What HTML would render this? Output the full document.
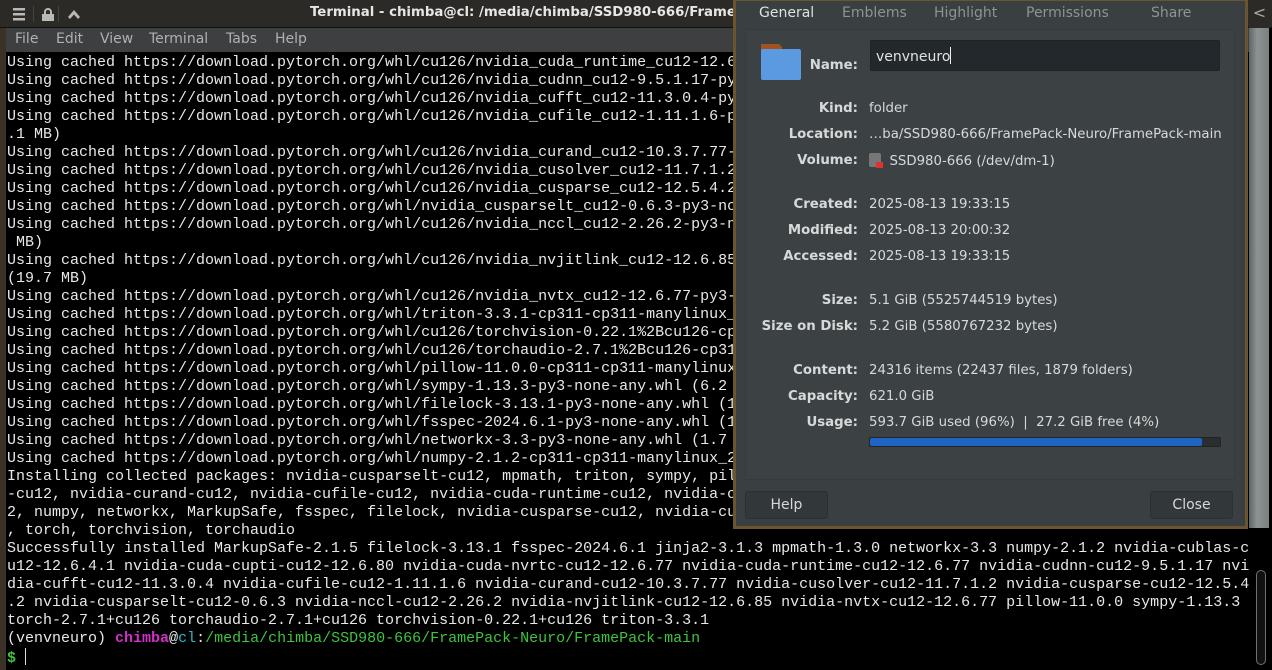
<!DOCTYPE html>
<html><head><meta charset="utf-8"><style>
*{margin:0;padding:0;box-sizing:border-box}
body{width:1272px;height:670px;overflow:hidden;background:#000;position:relative;font-family:"DejaVu Sans","Liberation Sans",sans-serif}
#title{position:absolute;left:0;top:0;width:1272px;height:28px;background:#2b2a27;border-bottom:1px solid #111}
#title .t{position:absolute;left:310px;top:5px;color:#e6e6e6;font-weight:bold;font-size:13.3px;font-family:"DejaVu Sans",sans-serif;white-space:nowrap}
#menu{position:absolute;left:6px;top:28px;width:1244px;height:24px;background:#3d3f40;color:#aeb2b2;font-size:14px}
#menu span{position:absolute;top:3px}
#term{position:absolute;left:7px;top:54px;font-family:"Liberation Mono",monospace;font-size:15px;line-height:18px;color:#e8e8e8;white-space:pre}
.m{color:#d02fc8;font-weight:bold}.c{color:#2fb9c8}.g{color:#3ec43e}
#lb{position:absolute;left:0;top:28px;width:6px;height:642px;background:#3a3226}
#sb{position:absolute;left:1249px;top:28px;width:21px;height:642px;background:#000}
#sbt{position:absolute;left:1249px;top:28px;width:20px;height:500px;background:linear-gradient(90deg,#5f6565,#8d9393 40%,#7a8080)}
#thumb{position:absolute;left:1256px;top:570px;width:10px;height:95px;border:1px solid #6d7373;border-radius:5px;background:#111}
#dlg{position:absolute;left:733px;top:-2px;width:515px;height:531px;background:#6b5430;padding:3px}
#in{position:absolute;left:3px;top:3px;right:3px;bottom:3px;background:#3a3f41}
#tabs{position:absolute;left:6px;top:0px;height:26px;font-size:14px;color:#8d9496}
#tabs span{position:absolute;top:4px;white-space:nowrap}
#panel{position:absolute;left:9px;top:28px;width:490px;height:451px;background:#3c4244;border:1px solid #353a3c}
.lbl{position:absolute;width:111px;text-align:right;font-weight:bold;color:#d6d9d9;font-size:13.3px;left:1px;margin-top:1px}
.val{position:absolute;left:123px;color:#d6d9d9;font-size:13.3px;white-space:nowrap;margin-top:1px}
.btn{position:absolute;top:490px;width:83px;height:28px;background:#32373a;border:1px solid #2c3032;border-radius:3px;color:#d6d9d9;font-size:14px;text-align:center;line-height:26px}
</style></head><body>
<div id="title">
<svg style="position:absolute;left:11px;top:6px" width="70" height="16"><g fill="#b8b8b8"><rect x="2" y="2" width="12" height="2.5"/><rect x="2" y="7" width="12" height="2.5"/><rect x="2" y="12" width="12" height="2.5"/><path d="M37 2a4 4 0 0 1 4 4v2h-2v-2a2 2 0 0 0-4 0v2h8v7h-12v-7h2v-2a4 4 0 0 1 4-4z"/><path d="M57 11l6-7 6 7-2 2-4-4.5-4 4.5z"/></g><rect x="22" y="0" width="1" height="16" fill="#444"/><rect x="47" y="0" width="1" height="16" fill="#444"/></svg>
<div class="t">Terminal - chimba@cl: /media/chimba/SSD980-666/FramePack-Neuro/FramePack-main</div>
</div>
<div id="lb"></div>
<div id="menu"><span style="left:9px">File</span><span style="left:50px">Edit</span><span style="left:94px">View</span><span style="left:143px">Terminal</span><span style="left:220px">Tabs</span><span style="left:269px">Help</span></div>
<div id="term">Using cached https://download.pytorch.org/whl/cu126/nvidia_cuda_runtime_cu12-12.6.77-py3-none-manylinux2014_x86_64.whl
Using cached https://download.pytorch.org/whl/cu126/nvidia_cudnn_cu12-9.5.1.17-py3-none-manylinux_2_28_x86_64.whl
Using cached https://download.pytorch.org/whl/cu126/nvidia_cufft_cu12-11.3.0.4-py3-none-manylinux2014_x86_64.whl
Using cached https://download.pytorch.org/whl/cu126/nvidia_cufile_cu12-1.11.1.6-py3-none-manylinux_2_27_x86_64.whl (1
.1 MB)
Using cached https://download.pytorch.org/whl/cu126/nvidia_curand_cu12-10.3.7.77-py3-none-manylinux2014_x86_64.whl
Using cached https://download.pytorch.org/whl/cu126/nvidia_cusolver_cu12-11.7.1.2-py3-none-manylinux2014_x86_64.whl
Using cached https://download.pytorch.org/whl/cu126/nvidia_cusparse_cu12-12.5.4.2-py3-none-manylinux2014_x86_64.whl
Using cached https://download.pytorch.org/whl/nvidia_cusparselt_cu12-0.6.3-py3-none-manylinux2014_x86_64.whl
Using cached https://download.pytorch.org/whl/cu126/nvidia_nccl_cu12-2.26.2-py3-none-manylinux2014_x86_64.whl (201.3
 MB)
Using cached https://download.pytorch.org/whl/cu126/nvidia_nvjitlink_cu12-12.6.85-py3-none-manylinux2010_x86_64.whl
(19.7 MB)
Using cached https://download.pytorch.org/whl/cu126/nvidia_nvtx_cu12-12.6.77-py3-none-manylinux2014_x86_64.whl
Using cached https://download.pytorch.org/whl/triton-3.3.1-cp311-cp311-manylinux_2_27_x86_64.whl
Using cached https://download.pytorch.org/whl/cu126/torchvision-0.22.1%2Bcu126-cp311-cp311-manylinux_2_28_x86_64.whl
Using cached https://download.pytorch.org/whl/cu126/torchaudio-2.7.1%2Bcu126-cp311-cp311-manylinux_2_28_x86_64.whl
Using cached https://download.pytorch.org/whl/pillow-11.0.0-cp311-cp311-manylinux_2_28_x86_64.whl
Using cached https://download.pytorch.org/whl/sympy-1.13.3-py3-none-any.whl (6.2 MB)
Using cached https://download.pytorch.org/whl/filelock-3.13.1-py3-none-any.whl (11 kB)
Using cached https://download.pytorch.org/whl/fsspec-2024.6.1-py3-none-any.whl (177 kB)
Using cached https://download.pytorch.org/whl/networkx-3.3-py3-none-any.whl (1.7 MB)
Using cached https://download.pytorch.org/whl/numpy-2.1.2-cp311-cp311-manylinux_2_17_x86_64.whl
Installing collected packages: nvidia-cusparselt-cu12, mpmath, triton, sympy, pillow, nvidia-nvtx-cu12, nvidia-nvjitlink
-cu12, nvidia-curand-cu12, nvidia-cufile-cu12, nvidia-cuda-runtime-cu12, nvidia-cuda-nvrtc-cu12, nvidia-cublas-cu1
2, numpy, networkx, MarkupSafe, fsspec, filelock, nvidia-cusparse-cu12, nvidia-cufft-cu12, nvidia-cudnn-cu12, jinja2
, torch, torchvision, torchaudio
Successfully installed MarkupSafe-2.1.5 filelock-3.13.1 fsspec-2024.6.1 jinja2-3.1.3 mpmath-1.3.0 networkx-3.3 numpy-2.1.2 nvidia-cublas-c
u12-12.6.4.1 nvidia-cuda-cupti-cu12-12.6.80 nvidia-cuda-nvrtc-cu12-12.6.77 nvidia-cuda-runtime-cu12-12.6.77 nvidia-cudnn-cu12-9.5.1.17 nvi
dia-cufft-cu12-11.3.0.4 nvidia-cufile-cu12-1.11.1.6 nvidia-curand-cu12-10.3.7.77 nvidia-cusolver-cu12-11.7.1.2 nvidia-cusparse-cu12-12.5.4
.2 nvidia-cusparselt-cu12-0.6.3 nvidia-nccl-cu12-2.26.2 nvidia-nvjitlink-cu12-12.6.85 nvidia-nvtx-cu12-12.6.77 pillow-11.0.0 sympy-1.13.3
torch-2.7.1+cu126 torchaudio-2.7.1+cu126 torchvision-0.22.1+cu126 triton-3.3.1
(venvneuro) <span class="m">chimba</span>@<span class="c">cl</span>:<span class="g">/media/chimba/SSD980-666/FramePack-Neuro/FramePack-main</span>
<span class="g" style="font-weight:bold">$</span> <span style="display:inline-block;width:1px;height:17px;background:#ddd;vertical-align:-3px"></span></div>
<div id="sb"></div><div id="sbt"></div><div id="thumb"></div>
<div style="position:absolute;left:1249px;top:0;width:21px;height:28px;background:#2b2a27;color:#aaa;font-size:16px;text-align:center;line-height:26px">&lt;</div>
<div id="dlg"><div id="in">
<div id="tabs"><span style="left:17px;color:#dfe2e2">General</span><span style="left:100px">Emblems</span><span style="left:192px">Highlight</span><span style="left:284px">Permissions</span><span style="left:409px">Share</span></div>
<div style="position:absolute;left:8px;top:28px;width:85px;height:1px;background:#3c4244"></div>
<div id="panel">
<svg style="position:absolute;left:15px;top:14px" width="42" height="38"><path d="M0 0h18l3 3v4H0z" fill="#a0541c"/><rect x="0" y="5" width="40" height="31" rx="2" fill="#5b9ae0"/></svg>
<div class="lbl" style="top:27px">Name:</div>
<div style="position:absolute;left:124px;top:10px;width:350px;height:31px;background:#23282c;border:1px solid #1f2326;border-radius:2px;color:#e0e3e3;font-size:14px;padding:6px 5px">venvneuro<span style="display:inline-block;width:1px;height:17px;background:#eee;vertical-align:-3px"></span></div>
<div class="lbl" style="top:70px">Kind:</div><div class="val" style="top:70px">folder</div>
<div class="lbl" style="top:96px">Location:</div><div class="val" style="top:96px">…ba/SSD980-666/FramePack-Neuro/FramePack-main</div>
<div class="lbl" style="top:122px">Volume:</div><div class="val" style="top:122px"><span style="display:inline-block;width:12px;height:14px;background:#777;border-radius:2px;vertical-align:-2px;position:relative"><span style="position:absolute;right:-2px;bottom:-1px;width:7px;height:6px;background:#d33"></span></span>&nbsp; SSD980-666 (/dev/dm-1)</div>
<div class="lbl" style="top:166px">Created:</div><div class="val" style="top:166px">2025-08-13 19:33:15</div>
<div class="lbl" style="top:192px">Modified:</div><div class="val" style="top:192px">2025-08-13 20:00:32</div>
<div class="lbl" style="top:218px">Accessed:</div><div class="val" style="top:218px">2025-08-13 19:33:15</div>
<div class="lbl" style="top:262px">Size:</div><div class="val" style="top:262px">5.1 GiB (5525744519 bytes)</div>
<div class="lbl" style="top:288px">Size on Disk:</div><div class="val" style="top:288px">5.2 GiB (5580767232 bytes)</div>
<div class="lbl" style="top:332px">Content:</div><div class="val" style="top:332px">24316 items (22437 files, 1879 folders)</div>
<div class="lbl" style="top:358px">Capacity:</div><div class="val" style="top:358px">621.0 GiB</div>
<div class="lbl" style="top:384px">Usage:</div><div class="val" style="top:384px">593.7 GiB used (96%) &nbsp;| &nbsp;27.2 GiB free (4%)</div>
<div style="position:absolute;left:123px;top:407px;width:352px;height:10px;background:#2a2e30;border:1px solid #222;border-radius:2px"><div style="width:332px;height:8px;background:#1f66c4;border-radius:2px"></div></div>
</div>
<div class="btn" style="left:9px">Help</div>
<div class="btn" style="left:414px">Close</div>
</div></div>
</body></html>
